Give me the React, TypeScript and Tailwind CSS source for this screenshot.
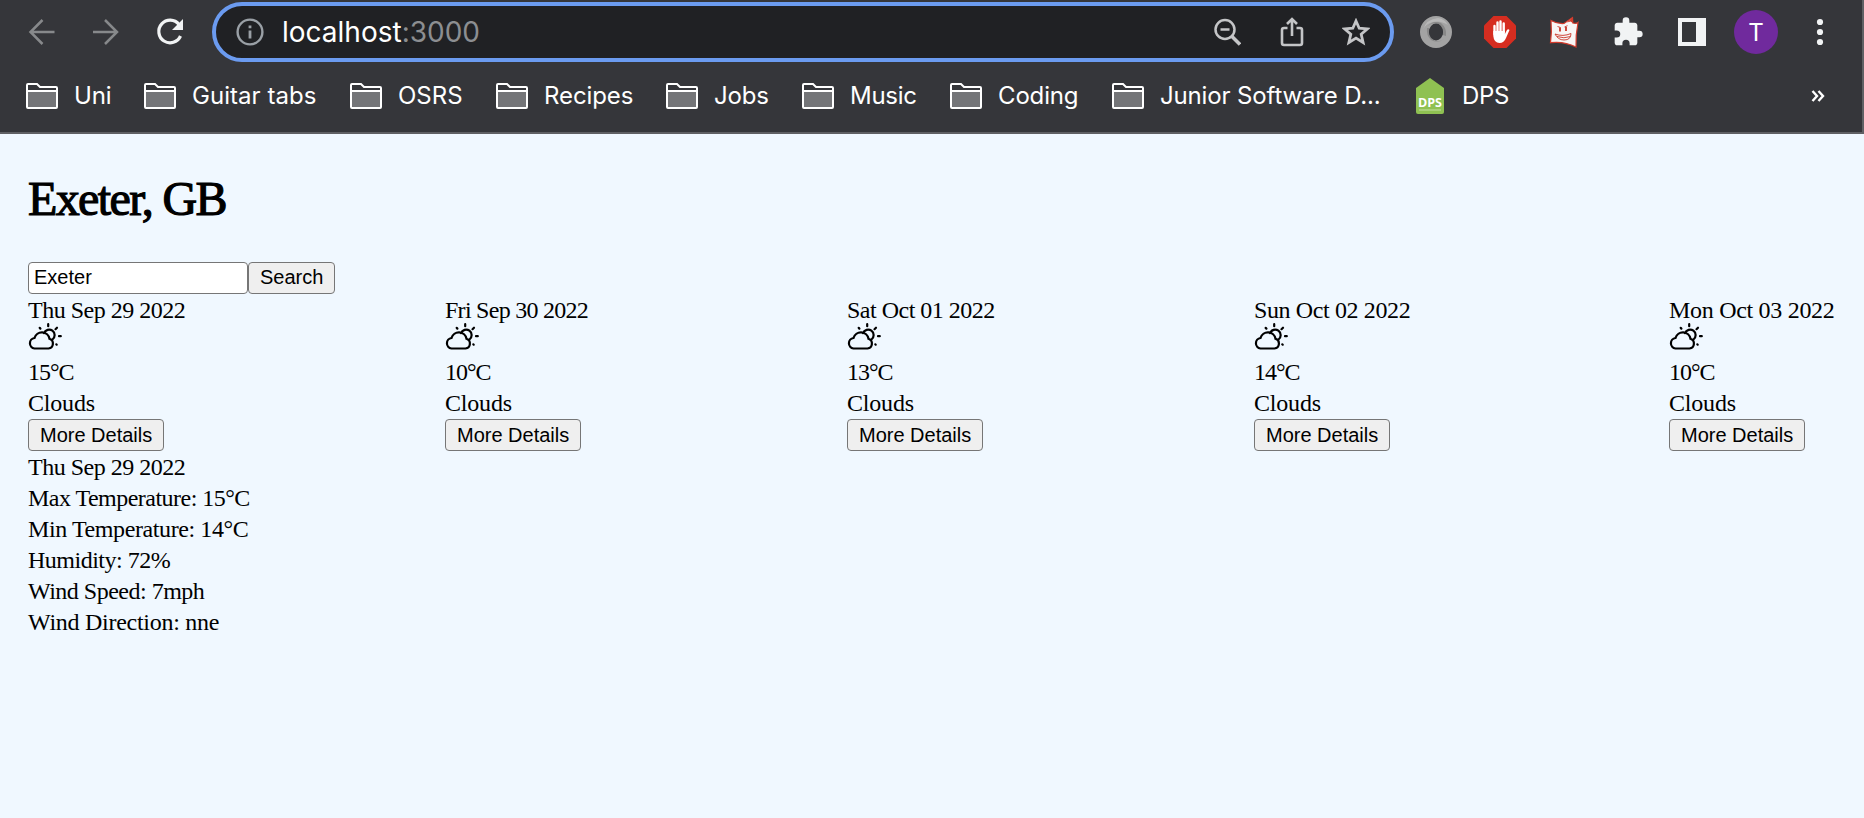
import React from "react";

const bookmarks = [
  { label: "Uni", box: "w-[118px]", track: "tracking-[-0.1px]" },
  { label: "Guitar tabs", box: "w-[206px]", track: "tracking-[0.05px]" },
  { label: "OSRS", box: "w-[146px]", track: "tracking-[0px]" },
  { label: "Recipes", box: "w-[170px]", track: "tracking-[-0.1px]" },
  { label: "Jobs", box: "w-[136px]", track: "tracking-[-0.2px]" },
  { label: "Music", box: "w-[148px]", track: "tracking-[-0.3px]" },
  { label: "Coding", box: "w-[162px]", track: "tracking-[-0.15px]" },
  { label: "Junior Software D...", box: "w-[303px]", track: "tracking-[-0.15px]" },
];

const days = [
  { date: "Thu Sep 29 2022", temp: "15°C", box: "w-[158px]", track: "tracking-[-0.5px]" },
  { date: "Fri Sep 30 2022", temp: "10°C", box: "w-[143px]", track: "tracking-[-0.73px]" },
  { date: "Sat Oct 01 2022", temp: "13°C", box: "w-[148px]", track: "tracking-[-0.5px]" },
  { date: "Sun Oct 02 2022", temp: "14°C", box: "w-[156px]", track: "tracking-[-0.38px]" },
  { date: "Mon Oct 03 2022", temp: "10°C", box: "w-[166px]", track: "tracking-[-0.3px]" },
];

const details = [
  { text: "Thu Sep 29 2022", track: "tracking-[-0.5px]" },
  { text: "Max Temperature: 15°C", track: "tracking-[-0.52px]" },
  { text: "Min Temperature: 14°C", track: "tracking-[-0.4px]" },
  { text: "Humidity: 72%", track: "tracking-[-0.5px]" },
  { text: "Wind Speed: 7mph", track: "tracking-[-0.5px]" },
  { text: "Wind Direction: nne", track: "tracking-[-0.27px]" },
];

function Folder() {
  return (
    <svg className="h-[26px] w-8 shrink-0" viewBox="0 0 32 26" fill="none">
      <path d="M2 8H30V24H2Z" fill="#747578" />
      <path d="M1 24V2Q1 1 2 1H11L14 4H30Q31 4 31 5V24Q31 25 30 25H2Q1 25 1 24ZM1 8H31" stroke="#fff" strokeWidth="2" />
    </svg>
  );
}

function WeatherIcon() {
  return (
    <svg className="-mt-[3px] h-[27px] w-[34px]" viewBox="0 0 34 27" fill="none" stroke="#000" strokeWidth="2.200" strokeLinecap="round">
      <path d="M6.500 25.500H20.500A5 5 0 0 0 21.500 15.800A7.700 7.700 0 0 0 6.500 15A5.300 5.300 0 0 0 6.500 25.500Z" />
      <path d="M16 10.200A5.500 5.500 0 1 1 24.500 16.500" />
      <path d="M20.200 1.200V3.200M11.700 4.900L12.400 5.600M29 4.700L27.500 6.200M31 13.200H32.800M28.300 21.300L28.700 21.700" />
    </svg>
  );
}

function Button({ children, leading = "leading-[28px]" }: { children: React.ReactNode; leading?: string }) {
  return (
    <button className={`flex h-8 shrink-0 items-start rounded-[4px] border border-[#767676] bg-[#efefef] px-[11px] pt-px font-['Liberation_Sans',sans-serif] text-[20px] whitespace-nowrap ${leading}`}>
      {children}
    </button>
  );
}

function Toolbar() {
  return (
    <div className="flex h-[64px] items-center pl-[26px]">
      <svg className="h-8 w-8 shrink-0" viewBox="0 0 32 32" fill="none" stroke="#87898b" strokeWidth="2.500">
        <path d="M28.500 16H5M16.500 4L4.500 16L16.500 28" />
      </svg>
      <svg className="ml-8 h-8 w-8 shrink-0" viewBox="0 0 32 32" fill="none" stroke="#87898b" strokeWidth="2.500">
        <path d="M3 16H27M15 4L27 16L15 28" />
      </svg>
      <svg className="ml-[33px] h-8 w-8 shrink-0" viewBox="0 0 32 32" fill="none">
        <path d="M25.500 20A11.300 11.300 0 1 1 24 8.500" stroke="#f1f3f4" strokeWidth="3.200" />
        <path d="M28 3V14H17Z" fill="#f1f3f4" />
      </svg>
      <div className="ml-[25px] flex h-[60px] w-[1182px] shrink-0 items-center rounded-full border-4 border-[#6b9bf0] bg-[#202124] pl-5 pr-5">
        <svg className="h-7 w-7 shrink-0" viewBox="0 0 28 28" fill="none">
          <circle cx="14" cy="14" r="12.400" stroke="#9aa0a6" strokeWidth="2.400" />
          <path d="M14 12.500V20.500M14 7.500V10.300" stroke="#9aa0a6" strokeWidth="2.800" />
        </svg>
        <div className="ml-[18px] flex-1 text-[28px] leading-8 tracking-[0px] text-white">
          localhost<span className="text-[#8c8e91]">:3000</span>
        </div>
        <svg className="h-7 w-7" viewBox="0 0 28 28" fill="none" stroke="#c4c5c7" strokeWidth="2.500">
          <circle cx="12" cy="11.500" r="9.500" />
          <path d="M7.500 11.500H16.500" />
          <path d="M19 18.500L27 26.500" strokeWidth="3.500" />
        </svg>
        <svg className="ml-[37px] h-8 w-7" viewBox="0 0 28 32" fill="none" stroke="#c4c5c7" strokeWidth="2.600">
          <path d="M9.500 12H6Q4 12 4 14V27Q4 29 6 29H22Q24 29 24 27V14Q24 12 22 12H18.500M14 20V3M9 8L14 3L19 8" />
        </svg>
        <svg className="ml-9 h-7 w-7" viewBox="0 0 28 28" fill="none" stroke="#c4c5c7" strokeWidth="2.800">
          <path d="M14 3L17.200 10.200L25.500 10.900L19.200 16.300L21.100 24.500L14 20.100L6.900 24.500L8.800 16.300L2.500 10.900L10.800 10.200Z" />
        </svg>
      </div>
      <svg className="ml-[26px] h-8 w-8 shrink-0" viewBox="0 0 32 32">
        <circle cx="16" cy="16" r="11.500" fill="none" stroke="#a3a3a3" strokeWidth="9" />
        <path d="M3 14Q6 3 18 2Q25 3 28 9Q20 4 13 6Q5 8 3 14Z" fill="#b8b8b8" />
        <path d="M8 10Q13 4 21 7Q27 12 26 20L23 19Q24 9 16 7Q11 7 8 10Z" fill="#888" />
        <path d="M24 23Q18 28 11 24Q6 19 7 12L9 12Q8 22 15 25Q20 26 24 23Z" fill="#888" />
        <ellipse cx="16" cy="16" rx="7" ry="8.500" fill="#35363a" />
      </svg>
      <svg className="ml-8 h-8 w-8 shrink-0" viewBox="0 0 32 32">
        <path d="M9.500 0H22.500L32 9.500V22.500L22.500 32H9.500L0 22.500V9.500Z" fill="#d62d20" />
        <path d="M13.500 16V6.500M16.500 16V5.500M19.700 16V7.500M10.500 18V10" stroke="#fff" strokeWidth="2.400" strokeLinecap="round" />
        <path d="M9.300 15H20.900V18L22.700 14.500Q24 12.500 25.500 14L22 22Q20 27 15.500 27Q10 27 9.300 20Z" fill="#fff" />
      </svg>
      <svg className="ml-8 h-8 w-8 shrink-0" viewBox="0 0 32 32" fill="none">
        <path d="M3 4.500Q9 8 16 7.500L24.500 1.500L24.800 7Q28 8 30 6.500Q27.500 19 28 31Q16 25 2.500 26.700Q4 16 3 4.500Z" fill="#f8f6f5" stroke="#d33b2c" strokeWidth="1.200" />
        <path d="M19 6.500L24.500 1.500L24.800 7L22.500 5.500Z" fill="#d33b2c" />
        <path d="M12 11.500V15.500M18 11V15" stroke="#c93629" strokeWidth="1.800" />
        <path d="M9.500 10.500L12.500 11.500M16.500 11L19.500 9.700M7 18Q15 21 23 17.500Q23 24 16 24Q10 24 7 18ZM9 20.500Q16 23 22.500 20.500" stroke="#c93629" strokeWidth="0.900" />
      </svg>
      <svg className="ml-8 h-8 w-8 shrink-0" viewBox="0 0 24 24" fill="#f1f3f4">
        <path d="M20.500 11H19V7c0-1.100-.9-2-2-2h-4V3.500a2.500 2.500 0 0 0-5 0V5H4c-1.100 0-1.990.9-1.990 2v3.800H3.500a2.700 2.700 0 0 1 0 5.400H2V20c0 1.100.9 2 2 2h3.800v-1.500a2.700 2.700 0 0 1 5.400 0V22H17c1.100 0 2-.9 2-2v-4h1.500a2.500 2.500 0 0 0 0-5z" />
      </svg>
      <svg className="ml-[34px] h-7 w-7 shrink-0" viewBox="0 0 28 28" fill="#f1f3f4">
        <path fillRule="evenodd" d="M0 0H28V28H0ZM4 4V24H18V4Z" />
      </svg>
      <div className="ml-7 flex size-11 shrink-0 items-center justify-center rounded-full bg-[#702a9d] pt-px text-[24px] text-white">T</div>
      <svg className="ml-[38px] h-7 w-2 shrink-0" viewBox="0 0 8 28" fill="#f1f3f4">
        <circle cx="4" cy="4" r="3.100" />
        <circle cx="4" cy="14" r="3.100" />
        <circle cx="4" cy="24" r="3.100" />
      </svg>
    </div>
  );
}

export default function App() {
  return (
    <div className="flex h-[818px] w-[1864px] flex-col overflow-hidden bg-[#f0f8ff] text-black">
      <header className="h-[134px] shrink-0 border-r-2 border-b-2 border-[#5f6064] bg-[#35363a] font-[Inter,sans-serif]">
        <Toolbar />
        <nav className="flex h-[64px] items-center pl-[26px] text-[24px] text-white">
          {bookmarks.map((b) => (
            <div key={b.label} className={`flex shrink-0 items-center gap-4 ${b.box}`}>
              <Folder />
              <span className={`whitespace-nowrap ${b.track}`}>{b.label}</span>
            </div>
          ))}
          <svg className="h-9 w-[30px] shrink-0 overflow-visible" viewBox="0 0 30 36">
            <path d="M15 0L29 10V34Q29 36 27 36H3Q1 36 1 34V10Z" fill="#8fc152" />
            <text x="15" y="29" textAnchor="middle" fill="#fff" className="font-['Open_Sans',sans-serif] text-[12.500px] font-bold">DPS</text>
            <path d="M4 32H26" stroke="#c4e0a2" strokeWidth="1" />
          </svg>
          <span className="ml-[17px] tracking-[-0.3px]">DPS</span>
          <svg className="mr-[37px] ml-auto h-3 w-[14px]" viewBox="0 0 14 12" fill="none" stroke="#fff" strokeWidth="2.400">
            <path d="M1.500 1L6 6L1.500 11M7.500 1L12 6L7.500 11" />
          </svg>
        </nav>
      </header>
      <main className="flex flex-col pr-[29px] pl-7 font-['Liberation_Serif',serif] text-[24px] leading-[31px]">
        <h1 className="mt-[34px] h-[94px] text-[48px] leading-[62px] tracking-[-1.600px] [-webkit-text-stroke:1.2px_black]">Exeter, GB</h1>
        <div className="flex h-8">
          <input defaultValue="Exeter" className="h-8 w-[220px] rounded-[4px] border border-[#767676] bg-white px-[5px] pb-px font-['Liberation_Sans',sans-serif] text-[20px]" />
          <Button leading="leading-[26px]">Search</Button>
        </div>
        <section className="flex justify-between pt-px">
          {days.map((d) => (
            <div key={d.date} className={`flex flex-col items-start whitespace-nowrap ${d.box}`}>
              <div className={d.track}>{d.date}</div>
              <div className="flex h-[31px] items-start"><WeatherIcon /></div>
              <div className="tracking-[-1px]">{d.temp}</div>
              <div className="tracking-[-0.2px]">Clouds</div>
              <Button>More Details</Button>
            </div>
          ))}
        </section>
        <section className="pt-px whitespace-nowrap">
          {details.map((d) => (
            <div key={d.text}><span className={d.track}>{d.text}</span></div>
          ))}
        </section>
      </main>
    </div>
  );
}
